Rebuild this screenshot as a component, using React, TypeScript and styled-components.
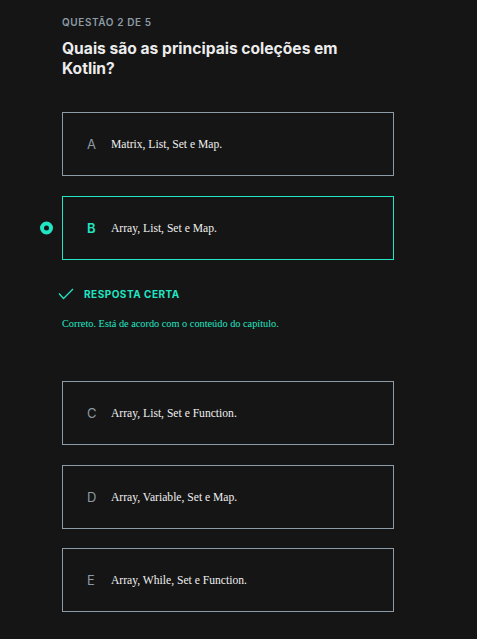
import React from "react";
import styled, { createGlobalStyle } from "styled-components";

const Global = createGlobalStyle`
  html, body { margin: 0; padding: 0; background: #151515; }
  body { font-family: Inter, "Noto Sans", sans-serif; }
`;

const TEAL = "#22e5c3";
const GRAY = "#8c9ba5";

const Page = styled.main`
  width: 477px;
  min-height: 639px;
  background: #151515;
  box-sizing: border-box;
  padding: 15px 83px 24px 62px;
  display: flex;
  flex-direction: column;
`;

const Kicker = styled.div`
  font-family: Inter, sans-serif;
  font-weight: 600;
  font-size: 10px;
  letter-spacing: 0.6px;
  color: ${GRAY};
  line-height: 14px;
`;

const Title = styled.h1`
  margin: 10px 0 0;
  font-family: Inter, sans-serif;
  font-weight: 700;
  font-size: 15.6px;
  line-height: 20px;
  color: #ececec;
  max-width: 320px;
`;

const List = styled.div<{ $top: number }>`
  margin-top: ${(p) => p.$top}px;
  display: flex;
  flex-direction: column;
`;

const OptionWrap = styled.div<{ $gap: number }>`
  position: relative;
  margin-top: ${(p) => p.$gap}px;
`;

const Box = styled.div<{ $selected?: boolean }>`
  height: 64px;
  box-sizing: border-box;
  border: 1px solid ${(p) => (p.$selected ? TEAL : GRAY)};
  display: flex;
  align-items: center;
  padding-left: 24px;
  gap: 13px;
`;

const Letter = styled.span<{ $selected?: boolean }>`
  font-family: Inter, sans-serif;
  font-size: 13px;
  font-weight: ${(p) => (p.$selected ? 600 : 400)};
  color: ${(p) => (p.$selected ? TEAL : GRAY)};
  width: 11px;
`;

const Answer = styled.span`
  font-family: "Liberation Serif", serif;
  font-size: 11.6px;
  color: #f0f0f0;
`;

const Radio = styled.span`
  position: absolute;
  left: -22px;
  top: 50%;
  transform: translateY(-50%);
  width: 13px;
  height: 13px;
  box-sizing: border-box;
  border-radius: 50%;
  border: 4px solid ${TEAL};
`;

const Feedback = styled.div`
  margin-top: 28px;
  display: flex;
  flex-direction: column;
`;

const Status = styled.div`
  display: flex;
  align-items: center;
  gap: 10px;
  margin-left: -4px;
`;

const StatusText = styled.span`
  font-family: Inter, sans-serif;
  font-weight: 700;
  font-size: 10px;
  letter-spacing: 0.5px;
  color: ${TEAL};
`;

const Note = styled.p`
  margin: 18px 0 0;
  font-family: "Liberation Serif", serif;
  font-size: 10.3px;
  color: ${TEAL};
`;

const options = [
  { l: "A", t: "Matrix, List, Set e Map.", gap: 0 },
  { l: "B", t: "Array, List, Set e Map.", gap: 20, sel: true },
];
const rest = [
  { l: "C", t: "Array, List, Set e Function.", gap: 0 },
  { l: "D", t: "Array, Variable, Set e Map.", gap: 20 },
  { l: "E", t: "Array, While, Set e Function.", gap: 19 },
];

function Option({ l, t, gap, sel }: { l: string; t: string; gap: number; sel?: boolean }) {
  return (
    <OptionWrap $gap={gap}>
      {sel && <Radio />}
      <Box $selected={sel}>
        <Letter $selected={sel}>{l}</Letter>
        <Answer>{t}</Answer>
      </Box>
    </OptionWrap>
  );
}

export default function App() {
  return (
    <>
      <Global />
      <Page>
        <Kicker>QUESTÃO 2 DE 5</Kicker>
        <Title>Quais são as principais coleções em Kotlin?</Title>
        <List $top={33}>
          {options.map((o) => (
            <Option key={o.l} {...o} />
          ))}
        </List>
        <Feedback>
          <Status>
            <svg width="16" height="12" viewBox="0 0 16 12" fill="none">
              <path d="M1 5.5 L5.5 10.5 L15 1" stroke={TEAL} strokeWidth="1.3" />
            </svg>
            <StatusText>RESPOSTA CERTA</StatusText>
          </Status>
          <Note>Correto. Está de acordo com o conteúdo do capítulo.</Note>
        </Feedback>
        <List $top={52}>
          {rest.map((o) => (
            <Option key={o.l} {...o} />
          ))}
        </List>
      </Page>
    </>
  );
}
